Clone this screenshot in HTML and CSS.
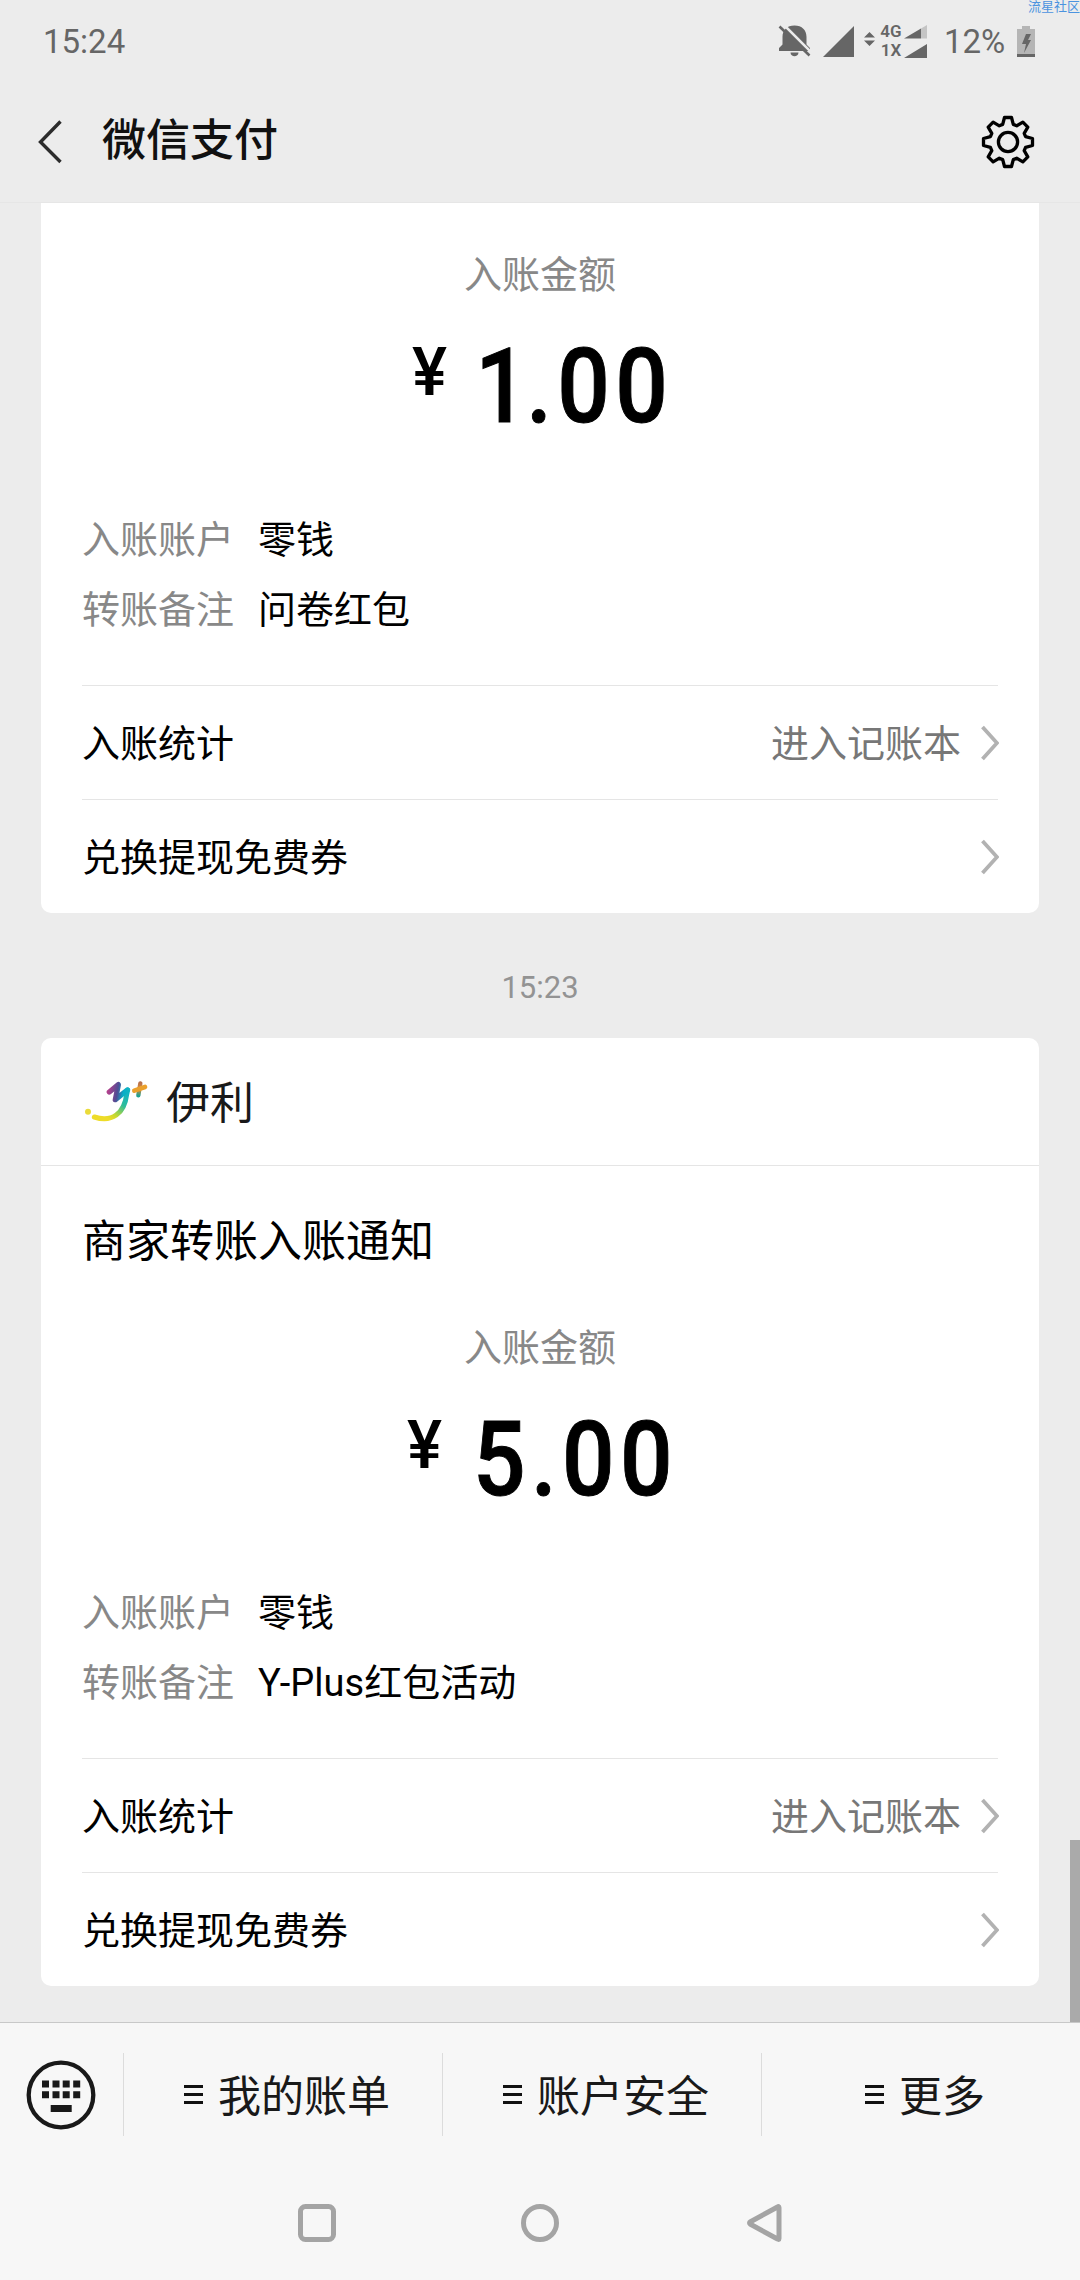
FILE: index.html
```html
<!DOCTYPE html>
<html lang="zh-CN">
<head>
<meta charset="utf-8">
<title>微信支付</title>
<link rel="stylesheet" href="styles.css">
</head>
<body>
<div class="screen">
  <span class="watermark">流星社区</span>
  <header class="top">
    <div class="status">
      <span class="clock">15:24</span>
      <svg class="bell" width="34" height="34" viewBox="0 0 34 34"><path fill="#666" d="M16.500 1.500C9 1.500 4.500 6 4.500 13v7.500L1 24v3h31v-3l-3.500-3.500V13C28.500 6 24 1.500 16.500 1.500zM12.500 28.500h8c0 5-8 5-8 0z"/><path stroke="#ececec" stroke-width="2.600" d="M4 -1l31 31"/><path stroke="#666" stroke-width="2.600" d="M1.500 2.500L31.500 31.500"/></svg>
      <svg class="signal" width="31" height="31" viewBox="0 0 31 31"><path fill="#666" d="M0 31H31V0z"/></svg>
      <svg class="updown" width="11" height="14" viewBox="0 0 11 14"><path fill="#666" d="M0 5.500L5.500 0 11 5.500zM0 8.500h11L5.500 14z"/></svg>
      <span class="modes"><span>4G</span><span>1X</span></span>
      <svg class="duo" width="23" height="33" viewBox="0 0 23 33"><path fill="#c4c4c4" d="M17 3.500L23 0v13.500h-6z"/><path fill="#666" d="M0 13.500L17 3.500v10zM0 33h23V19z"/></svg>
      <span class="percent">12%</span>
      <svg class="battery" width="18" height="31" viewBox="0 0 18 31"><path fill="#b5b5b5" d="M5 0h8v3h5v28H0V3h5z"/><path fill="#666" d="M0 28h18v3H0zM9 8h5l-3 6h3L7 27l2-9H5z"/></svg>
    </div>
    <div class="titlebar">
      <svg class="back" width="24" height="44" viewBox="0 0 24 44"><path fill="none" stroke="#2c2c2c" stroke-width="3.400" d="M22.500 1.500L2.500 22 22.500 42"/></svg>
      <h1>微信支付</h1>
      <svg class="gear" width="54" height="54" viewBox="-27 -27 54 54"><g fill="none" stroke="#000" stroke-width="3.300" stroke-linejoin="round"><path d="M-3.500-24.500H3.500L5.300-17.600 8.700-16.200 14.850-19.800 19.800-14.850 16.200-8.700 17.600-5.300 24.500-3.500V3.500L17.600 5.300 16.200 8.700 19.800 14.850 14.850 19.800 8.700 16.200 5.300 17.600 3.500 24.500H-3.500L-5.300 17.600-8.700 16.200-14.850 19.800-19.800 14.850-16.200 8.700-17.600 5.300-24.500 3.500V-3.500L-17.600-5.300-16.200-8.700-19.800-14.850-14.850-19.800-8.700-16.200-5.300-17.600Z"/><circle r="9.600"/></g></svg>
    </div>
  </header>

  <main class="chat">
    <section class="card card-cut">
      <div class="body">
        <p class="caption">入账金额</p>
        <p class="amount"><span class="yen">¥</span><span class="digits digits-one"><span class="one">1</span>.00</span></p>
        <dl class="details">
          <dt>入账账户</dt><dd>零钱</dd>
          <dt>转账备注</dt><dd>问卷红包</dd>
        </dl>
        <div class="link"><span>入账统计</span><span class="hint">进入记账本</span><svg class="chev" width="18" height="36" viewBox="0 0 18 36"><path d="M1.500 2L16 18 1.500 34"/></svg></div>
        <div class="link"><span>兑换提现免费券</span><svg class="chev" width="18" height="36" viewBox="0 0 18 36"><path d="M1.500 2L16 18 1.500 34"/></svg></div>
      </div>
    </section>

    <p class="time">15:23</p>

    <section class="card">
      <div class="merchant">
        <svg width="66" height="47" viewBox="159 170 198 141">
          <defs>
            <linearGradient id="y" gradientUnits="userSpaceOnUse" x1="235" y1="210" x2="295" y2="220"><stop offset="0" stop-color="#b0408c"/><stop offset=".45" stop-color="#4f4c94"/><stop offset=".75" stop-color="#08aec8"/><stop offset="1" stop-color="#10b4c0"/></linearGradient>
            <linearGradient id="s" gradientUnits="userSpaceOnUse" x1="290" y1="215" x2="235" y2="295"><stop offset="0" stop-color="#0fb3c6"/><stop offset=".4" stop-color="#2dbd9a"/><stop offset=".8" stop-color="#c8d92e"/><stop offset="1" stop-color="#eedc28"/></linearGradient>
            <linearGradient id="p" gradientUnits="userSpaceOnUse" x1="331" y1="187" x2="325" y2="226"><stop offset="0" stop-color="#b8704c"/><stop offset=".5" stop-color="#d88c3c"/><stop offset="1" stop-color="#20a090"/></linearGradient>
          </defs>
          <g fill="none" stroke-linecap="round" stroke-linejoin="round">
            <path stroke="url(#s)" stroke-width="15" d="M193 290C246 307 283 280 290 222L293 209"/>
            <path stroke="url(#y)" stroke-width="16" d="M238 215L265 193 256 238 292 209"/>
            <path stroke="url(#p)" stroke-width="13" d="M331 189L325 225"/>
            <path stroke="#eba02c" stroke-width="14" d="M313 211L345 200"/>
          </g>
          <circle cx="174" cy="274" r="9" fill="#eadb3a"/>
        </svg>
        <span>伊利</span>
      </div>
      <div class="body body-titled">
        <h2>商家转账入账通知</h2>
        <p class="caption">入账金额</p>
        <p class="amount"><span class="yen">¥</span><span class="digits">5.00</span></p>
        <dl class="details">
          <dt>入账账户</dt><dd>零钱</dd>
          <dt>转账备注</dt><dd>Y-Plus红包活动</dd>
        </dl>
        <div class="link"><span>入账统计</span><span class="hint">进入记账本</span><svg class="chev" width="18" height="36" viewBox="0 0 18 36"><path d="M1.500 2L16 18 1.500 34"/></svg></div>
        <div class="link"><span>兑换提现免费券</span><svg class="chev" width="18" height="36" viewBox="0 0 18 36"><path d="M1.500 2L16 18 1.500 34"/></svg></div>
      </div>
    </section>
    <span class="scrollbar"></span>
  </main>

  <footer>
    <div class="menu">
      <div class="keyboard"><svg width="70" height="70" viewBox="0 0 70 70"><circle cx="35" cy="35" r="32.300" fill="none" stroke="#191919" stroke-width="4.300"/><path fill="#191919" d="M16 20.500h7v7h-7zM26.500 20.500h7v7h-7zM36.700 20.500h7v7h-7zM47.200 20.500h7v7h-7zM16 31.200h7v7h-7zM26.500 31.200h7v7h-7zM36.700 31.200h7v7h-7zM47.200 31.200h7v7h-7zM24.700 45h21v7h-21z"/></svg></div>
      <div class="tab"><i class="bars"></i><span>我的账单</span></div>
      <div class="tab"><i class="bars"></i><span>账户安全</span></div>
      <div class="tab"><i class="bars"></i><span>更多</span></div>
    </div>
    <div class="nav">
      <svg width="38" height="38" viewBox="0 0 38 38"><rect x="2.500" y="2.500" width="33" height="33" rx="5"/></svg>
      <svg width="38" height="38" viewBox="0 0 38 38"><circle cx="19" cy="19" r="16.500"/></svg>
      <svg width="38" height="38" viewBox="0 0 38 38"><path d="M35 3.500V34.500Q35 36 33.500 35L6.500 20.300Q4.500 19 6.500 17.700L33.500 3Q35 2 35 3.500z"/></svg>
    </div>
  </footer>
</div>
</body>
</html>
```
FILE: styles.css
```css
* { box-sizing: border-box; margin: 0; padding: 0; }
body {
  background: #ececec;
  color: #000;
  font-family: Roboto, "Noto Sans CJK SC", sans-serif;
  font-size: 38px;
}
svg { display: block; flex: none; }
.screen {
  position: relative;
  display: flex;
  flex-direction: column;
  width: 1080px;
  height: 2280px;
  overflow: hidden;
}
.watermark {
  position: absolute;
  top: -2px;
  left: 1028px;
  color: #4b93df;
  font-size: 13px;
  line-height: 18px;
  white-space: nowrap;
}

.top { height: 203px; border-bottom: 1px solid #e6e6e6; }
.status {
  display: flex;
  align-items: center;
  height: 82px;
  padding: 0 45px 0 43px;
  color: #666;
  font-size: 33px;
}
.clock { margin-right: auto; }
.bell { margin-right: 11px; }
.signal { margin-right: 10px; }
.updown { margin: -4px 4px 0 0; }
.modes {
  display: flex;
  flex-direction: column;
  width: 24px;
  margin-right: 1px;
  align-items: center;
  font-size: 17px;
  font-weight: 600;
  line-height: 19px;
}
.duo { margin-right: 17px; }
.percent { width: 73px; }
.titlebar {
  display: flex;
  align-items: center;
  height: 120px;
  padding: 0 45px 0 38px;
}
.titlebar h1 {
  margin: -3px auto 0 40px;
  color: #111;
  font-size: 44px;
  font-weight: 500;
  line-height: 60px;
}

.chat { position: relative; height: 1819px; padding: 0 41px; }
.card { overflow: hidden; border-radius: 10px; background: #fff; }
.card-cut { border-radius: 0 0 10px 10px; }
.body { padding: 42px 41px 0; }
.body-titled { padding-top: 46px; }
.body h2 { margin-bottom: 46px; font-size: 44px; font-weight: 400; line-height: 60px; }
.caption { color: #888; line-height: 60px; text-align: center; }
.amount {
  display: flex;
  justify-content: center;
  height: 100px;
  margin-top: 30px;
  font-size: 104px;
  font-weight: 500;
  line-height: 104px;
}
.yen { margin: 0 31px 0 -2px; font-size: 66px; line-height: 76px; }
.digits {
  width: 198px;
  letter-spacing: 6px;
  white-space: nowrap;
  transform: scaleX(.89);
  transform-origin: left;
  -webkit-text-stroke: 1px #000;
}
.digits-one { width: 188px; }
.one { margin-left: -3px; letter-spacing: -2px; }
.details {
  display: grid;
  grid-template-columns: 176px 1fr;
  grid-auto-rows: 70px;
  margin: 70px 0 40px;
  line-height: 70px;
}
.details dt { color: #888; }
.link {
  display: flex;
  align-items: center;
  height: 114px;
  border-top: 1px solid #e5e5e5;
}
.link > span { padding-bottom: 4px; }
.link > :first-child { margin-right: auto; }
.hint { margin-right: 20px; color: #777; }
.chev { margin-right: -1px; }
.chev path { fill: none; stroke: #b2b2b2; stroke-width: 3.800; }
.time {
  margin: 50px 0 25px;
  color: #939393;
  font-size: 31px;
  line-height: 50px;
  text-align: center;
}
.merchant {
  display: flex;
  align-items: center;
  gap: 17px;
  height: 128px;
  padding: 0 42px 2px;
  border-bottom: 1px solid #e5e5e5;
  color: #191919;
  font-size: 44px;
}
.merchant span { padding-bottom: 2px; }
.scrollbar {
  position: absolute;
  right: 0;
  bottom: 0;
  width: 10px;
  height: 182px;
  background: #aaa;
}

footer { flex: 1; border-top: 1px solid #c8c8c8; background: #f7f7f7; }
.menu {
  display: grid;
  grid-template-columns: 123px 319px 319px 319px;
  align-items: center;
  height: 143px;
}
.keyboard { padding-left: 26px; }
.tab {
  display: flex;
  align-items: center;
  justify-content: center;
  gap: 15px;
  height: 83px;
  padding-left: 8px;
  border-left: 1px solid #dcdcdc;
  color: #191919;
  font-size: 43px;
}
.tab span { padding-bottom: 4px; }
.bars {
  width: 19px;
  height: 19px;
  border-top: 3px solid #111;
  border-bottom: 3px solid #111;
  background: linear-gradient(#111, #111) center / 19px 3px no-repeat;
}
.nav {
  display: flex;
  align-items: center;
  justify-content: center;
  gap: 185px;
  height: 114px;
}
.nav path, .nav rect, .nav circle { fill: none; stroke: #a4a4a4; stroke-width: 5; stroke-linejoin: round; }
```
